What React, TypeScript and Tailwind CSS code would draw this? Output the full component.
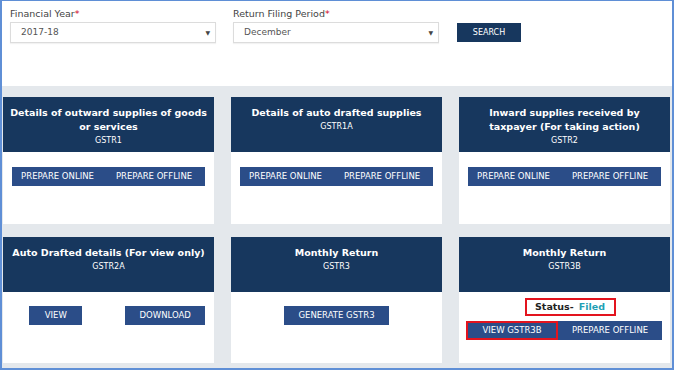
import React from "react";

const font = { fontFamily: '"DejaVu Sans", Verdana, sans-serif' };

function Header({ title, code, pad = "px-[3px]" }: { title: string; code: string; pad?: string }) {
  return (
    <div className={"h-[55px] bg-[#17375e] pt-[9px] text-center text-white " + pad}>
      <div className="text-[9.5px] font-bold leading-[14px]">{title}</div>
      <div className="mt-[1px] text-[8px] leading-[12px]">{code}</div>
    </div>
  );
}

function Btn({ children, className = "" }: { children: React.ReactNode; className?: string }) {
  return (
    <div
      className={
        "flex h-[19px] items-center justify-center bg-[#2b4d88] text-[8.5px] leading-none text-white " +
        className
      }
    >
      {children}
    </div>
  );
}

function PrepareGroup() {
  return (
    <div className="mx-[9px] mt-[15px] flex">
      <Btn className="w-[91px]">PREPARE ONLINE</Btn>
      <Btn className="flex-1">PREPARE OFFLINE</Btn>
    </div>
  );
}

function Select({ value }: { value: string }) {
  return (
    <div className="flex h-[21px] w-[206px] items-center justify-between border border-[#dcdcdc] bg-white pl-[10px] pr-[5px] text-[9px] text-[#555] shadow-[0_1px_1px_rgba(0,0,0,0.05)]">
      <span>{value}</span>
      <span className="text-[6px] text-[#444]">▼</span>
    </div>
  );
}

export default function App() {
  return (
    <div
      style={font}
      className="flex h-[370px] w-[674px] flex-col overflow-hidden border-x-2 border-b-2 border-t border-[#5f8fd6] bg-white"
    >
      {/* filter bar */}
      <div className="flex h-[85px] shrink-0 gap-[17px] px-[8px] pt-[7px]">
        <div>
          <div className="mb-[2px] text-[9.5px] leading-[12px] text-[#444]">
            Financial Year<span className="text-[#d0021b]">*</span>
          </div>
          <Select value="2017-18" />
        </div>
        <div>
          <div className="mb-[2px] text-[9.5px] leading-[12px] text-[#444]">
            Return Filing Period<span className="text-[#d0021b]">*</span>
          </div>
          <Select value="December" />
        </div>
        <div className="ml-[1px] pt-[15px]">
          <div className="flex h-[19px] w-[64px] items-center justify-center bg-[#17375e] text-[8px] text-white">
            SEARCH
          </div>
        </div>
      </div>

      {/* return tiles */}
      <div className="grid flex-1 grid-cols-3 grid-rows-[127px_126px] content-start gap-x-[17px] gap-y-[13px] bg-[#e4e8ec] pl-[1px] pr-[2px] pt-[11px]">
        <div className="bg-white">
          <Header title="Details of outward supplies of goods or services" code="GSTR1" />
          <PrepareGroup />
        </div>
        <div className="bg-white">
          <Header title="Details of auto drafted supplies" code="GSTR1A" />
          <PrepareGroup />
        </div>
        <div className="bg-white">
          <Header
            title="Inward supplies received by taxpayer (For taking action)"
            code="GSTR2"
            pad="px-[20px]"
          />
          <PrepareGroup />
        </div>

        <div className="bg-white">
          <Header title="Auto Drafted details (For view only)" code="GSTR2A" />
          <div className="mt-[14px] grid grid-cols-2">
            <div className="flex justify-center">
              <Btn className="w-[53px]">VIEW</Btn>
            </div>
            <div className="flex justify-center pl-[8px]">
              <Btn className="w-[80px]">DOWNLOAD</Btn>
            </div>
          </div>
        </div>
        <div className="bg-white">
          <Header title="Monthly Return" code="GSTR3" />
          <div className="mt-[14px] flex justify-center">
            <Btn className="w-[105px]">GENERATE GSTR3</Btn>
          </div>
        </div>
        <div className="bg-white">
          <Header title="Monthly Return" code="GSTR3B" />
          <div className="mt-[6px] flex justify-center">
            <div className="ml-[11px] flex h-[18px] w-[91px] items-center justify-center border-2 border-[#e3141e] text-[9.5px] font-bold">
              <span className="text-[#222]">Status-</span>
              <span className="ml-[5px] text-[#1f9fb5]">Filed</span>
            </div>
          </div>
          <div className="ml-[7px] mr-[8px] mt-[5px] flex">
            <Btn className="w-[92px] border-2 border-[#e3141e]">VIEW GSTR3B</Btn>
            <Btn className="flex-1">PREPARE OFFLINE</Btn>
          </div>
        </div>
      </div>
    </div>
  );
}
